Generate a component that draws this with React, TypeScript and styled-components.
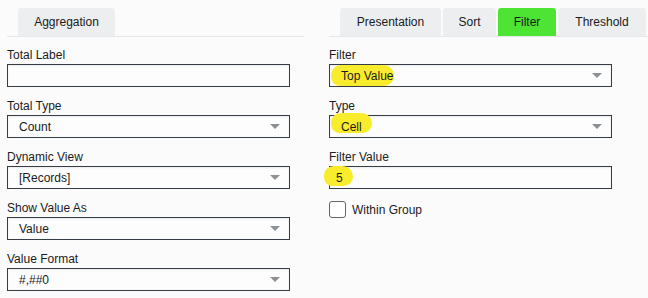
import styled, { createGlobalStyle } from "styled-components";

const GlobalStyle = createGlobalStyle`
  body {
    margin: 0;
    background: #fbfbfb;
    font-family: "Liberation Sans", Arial, sans-serif;
    font-size: 12px;
    color: #1b1b1b;
    overflow: hidden;
  }
`;

const Page = styled.div`
  display: flex;
  align-items: flex-start;
  gap: 25px;
  padding-left: 7px;
  width: 648px;
  box-sizing: border-box;
`;

const Column = styled.div<{ $width?: number }>`
  display: flex;
  flex-direction: column;
  width: ${(p) => (p.$width ? `${p.$width}px` : "auto")};
  flex: ${(p) => (p.$width ? "none" : "1")};
`;

const TabBar = styled.div`
  display: flex;
  flex: none;
  align-items: flex-end;
  gap: 2px;
  height: 36px;
  padding-left: 11px;
  border-bottom: 1px solid #e6e8ea;
`;

const Tab = styled.div<{ $active?: boolean; $width: number }>`
  display: flex;
  align-items: center;
  justify-content: center;
  width: ${(p) => p.$width}px;
  height: 28px;
  border-radius: 3px 3px 0 0;
  background: ${(p) => (p.$active ? "#4de433" : "#eceef0")};
  color: #1b1b1b;
  font-size: 12px;
`;

const Form = styled.div`
  display: flex;
  flex: none;
  flex-direction: column;
  padding-top: 11px;
`;

const FieldGroup = styled.div`
  display: flex;
  flex-direction: column;
  margin-bottom: 12px;
`;

const Label = styled.div`
  font-size: 12px;
  line-height: 14px;
  margin-bottom: 2px;
`;

const Box = styled.div<{ $pad: number }>`
  position: relative;
  display: flex;
  align-items: center;
  width: 283px;
  height: 23px;
  box-sizing: border-box;
  padding-left: ${(p) => p.$pad}px;
  border: 1px solid #353c43;
  background: #fdfdfd;
  box-shadow: inset 0 1px 2px rgba(0, 0, 0, 0.08);
`;

const Value = styled.span`
  position: relative;
  z-index: 2;
  line-height: 14px;
`;

const Arrow = styled.span`
  position: absolute;
  right: 9px;
  top: 8px;
  width: 0;
  height: 0;
  border-left: 5px solid transparent;
  border-right: 5px solid transparent;
  border-top: 5px solid #8c9196;
`;

const Marker = styled.span`
  position: absolute;
  z-index: 1;
  background: #f8ec2c;
  border-radius: 10px 11px 10px 9px;
`;

const CheckRow = styled.label`
  display: flex;
  align-items: center;
  gap: 6px;
  font-size: 12px;
`;

const CheckBox = styled.span`
  width: 17px;
  height: 17px;
  box-sizing: border-box;
  border: 1px solid #5f666d;
  border-radius: 3px;
  background: #fff;
`;

type Mark = { left: number; top: number; width: number; height: number };

const Field = ({
  label,
  value,
  select,
  mark,
}: {
  label: string;
  value?: string;
  select?: boolean;
  mark?: Mark;
}) => (
  <FieldGroup>
    <Label>{label}</Label>
    <Box $pad={select ? 11 : 6}>
      {mark && <Marker style={mark} />}
      {value && <Value>{value}</Value>}
      {select && <Arrow />}
    </Box>
  </FieldGroup>
);

export default function App() {
  return (
    <>
      <GlobalStyle />
      <Page>
        <Column $width={297}>
          <TabBar>
            <Tab $width={97}>Aggregation</Tab>
          </TabBar>
          <Form>
            <Field label="Total Label" />
            <Field label="Total Type" value="Count" select />
            <Field label="Dynamic View" value="[Records]" select />
            <Field label="Show Value As" value="Value" select />
            <Field label="Value Format" value="#,##0" select />
          </Form>
        </Column>
        <Column>
          <TabBar>
            <Tab $width={101}>Presentation</Tab>
            <Tab $width={53}>Sort</Tab>
            <Tab $width={58} $active>
              Filter
            </Tab>
            <Tab $width={88}>Threshold</Tab>
          </TabBar>
          <Form>
            <Field
              label="Filter"
              value="Top Value"
              select
              mark={{ left: 1, top: 0, width: 63, height: 21 }}
            />
            <Field
              label="Type"
              value="Cell"
              select
              mark={{ left: 1, top: -3, width: 41, height: 20 }}
            />
            <Field
              label="Filter Value"
              value="5"
              mark={{ left: -6, top: -1, width: 29, height: 20 }}
            />
            <CheckRow>
              <CheckBox />
              Within Group
            </CheckRow>
          </Form>
        </Column>
      </Page>
    </>
  );
}
